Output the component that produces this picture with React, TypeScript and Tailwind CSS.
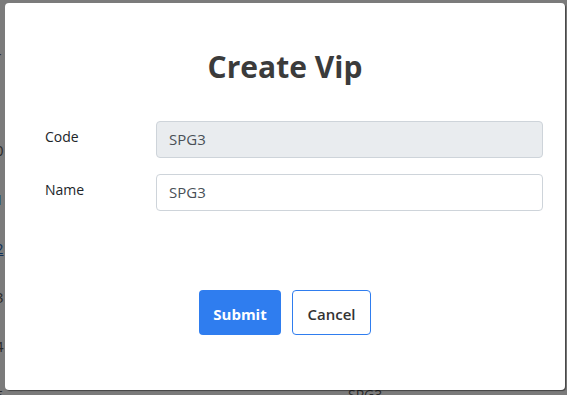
import type React from 'react'

const font = { fontFamily: '"Open Sans", "Noto Sans", sans-serif' }

function Field({ label, value, disabled }: { label: string; value: string; disabled?: boolean }): React.JSX.Element {
  return (
    <div className="flex items-start">
      <label className="w-[111px] shrink-0 pt-[5px] text-[14px] text-[#212529]">{label}</label>
      <div
        className={`flex h-[37px] flex-1 items-center rounded-[4px] border border-[#ced4da] px-[12px] text-[15px] text-[#495057] ${
          disabled ? 'bg-[#e9ecef]' : 'bg-white'
        }`}
      >
        {value}
      </div>
    </div>
  )
}

const rows = ['0', '1', '2', '3', '4', '5']

export default function App(): React.JSX.Element {
  return (
    <div className="relative h-[395px] w-[567px] overflow-hidden bg-[#7b7b7b]" style={font}>
      {/* page behind the overlay */}
      <div className="ml-[-5px] flex flex-col pt-[46px] text-[15px] leading-[20px] text-[#2a2a2a]">
        <div className="pl-[-1px]">r</div>
        <div className="mt-[74px] flex flex-col">
          {rows.map((n, i) => (
            <div key={n} className="flex h-[49px] items-start">
              <span className={`w-[353px] ${i === 1 || i === 2 ? 'text-[#10335a]' : ''} ${i === 2 ? 'underline' : ''}`}>
                {n}
              </span>
              <span className="text-[14px]">SPG3</span>
            </div>
          ))}
        </div>
      </div>

      {/* modal */}
      <div className="absolute left-[5px] top-[3px] flex h-[387px] w-[560px] flex-col rounded-[4px] bg-white pl-[40px] pr-[22px] pt-[44px] shadow-[1px_1px_1px_rgba(0,0,0,0.45)]">
        <h2 className="pr-[18px] text-center text-[30px] font-bold leading-[40px] text-[#3b3b3b]">Create Vip</h2>
        <div className="mt-[34px] flex flex-col gap-[16px]">
          <Field label="Code" value="SPG3" disabled />
          <Field label="Name" value="SPG3" />
        </div>
        <div className="mt-[79px] flex justify-center gap-[11px] pr-[18px]">
          <button className="h-[45px] w-[82px] rounded-[4px] bg-[#2f7def] pt-[3px] text-[15px] font-bold text-white">
            Submit
          </button>
          <button className="h-[45px] w-[79px] rounded-[4px] border border-[#2f7def] bg-white pt-[3px] text-[15px] font-semibold text-[#333]">
            Cancel
          </button>
        </div>
      </div>
    </div>
  )
}
